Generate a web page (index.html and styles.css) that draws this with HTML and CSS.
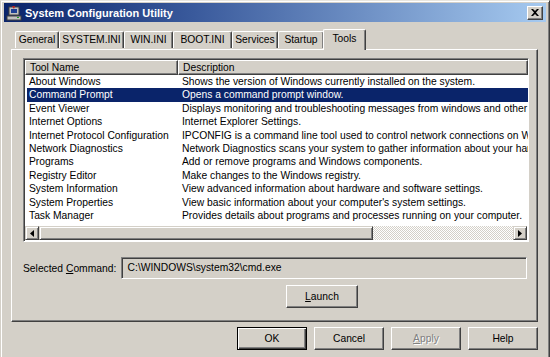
FILE: index.html
```html
<!DOCTYPE html>
<html>
<head>
  <link rel="stylesheet" href="styles.css">
</head>
<body>
  <div class="window">
    <div class="titlebar">
      <svg class="app-icon" width="16" height="16" viewBox="0 0 16 16">
        <rect x="3" y="2" width="10" height="8" fill="#c0c0c0" stroke="#404040" stroke-width="1"/>
        <rect x="5" y="4" width="6" height="4" fill="#1c3f94"/>
        <rect x="1" y="11" width="14" height="4" fill="#c0c0c0" stroke="#404040" stroke-width="1"/>
        <path d="M6 1 L9 1 L8 4 Z" fill="#c02020"/>
        <rect x="11" y="12" width="2" height="1" fill="#20a020"/>
      </svg>
      <span class="title">System Configuration Utility</span>
      <button class="close-btn">
        <svg width="8" height="7" viewBox="0 0 8 7"><path d="M0 0h2l2 2 2-2h2L5 3.5 8 7H6L4 5 2 7H0l3-3.5z" fill="#000"/></svg>
      </button>
    </div>

    <div class="content">
      <div class="tabs">
        <div class="tab" style="width:44px">General</div>
        <div class="tab" style="width:65px">SYSTEM.INI</div>
        <div class="tab" style="width:49px">WIN.INI</div>
        <div class="tab" style="width:59px">BOOT.INI</div>
        <div class="tab" style="width:46px">Services</div>
        <div class="tab" style="width:46px">Startup</div>
        <div class="tab active" style="width:43px">Tools</div>
      </div>

      <div class="panel">
        <div class="listview">
          <div class="lv-header">
            <div class="col-head">Tool Name</div>
            <div class="col-head">Description</div>
          </div>
          <div class="lv-body">
            <div class="row"><span>About Windows</span><span>Shows the version of Windows currently installed on the system.</span></div>
            <div class="row selected"><span>Command Prompt</span><span>Opens a command prompt window.</span></div>
            <div class="row"><span>Event Viewer</span><span>Displays monitoring and troubleshooting messages from windows and other programs.</span></div>
            <div class="row"><span>Internet Options</span><span>Internet Explorer Settings.</span></div>
            <div class="row"><span>Internet Protocol Configuration</span><span>IPCONFIG is a command line tool used to control network connections on Windows.</span></div>
            <div class="row"><span>Network Diagnostics</span><span>Network Diagnostics scans your system to gather information about your hardware.</span></div>
            <div class="row"><span>Programs</span><span>Add or remove programs and Windows components.</span></div>
            <div class="row"><span>Registry Editor</span><span>Make changes to the Windows registry.</span></div>
            <div class="row"><span>System Information</span><span>View advanced information about hardware and software settings.</span></div>
            <div class="row"><span>System Properties</span><span>View basic information about your computer's system settings.</span></div>
            <div class="row"><span>Task Manager</span><span>Provides details about programs and processes running on your computer.</span></div>
          </div>
          <div class="hscroll">
            <div class="sb-btn"><svg width="4" height="7" viewBox="0 0 4 7"><path d="M4 0v7L0 3.5z" fill="#000"/></svg></div>
            <div class="sb-track">
              <div class="sb-thumb"></div>
            </div>
            <div class="sb-btn"><svg width="4" height="7" viewBox="0 0 4 7"><path d="M0 0v7l4-3.5z" fill="#000"/></svg></div>
          </div>
        </div>

        <div class="command-row">
          <span class="label">Selected <u>C</u>ommand:</span>
          <div class="cmd-box">C:\WINDOWS\system32\cmd.exe</div>
        </div>

        <div class="launch-row">
          <button class="btn launch"><u>L</u>aunch</button>
        </div>
      </div>

      <div class="footer">
        <button class="btn default">OK</button>
        <button class="btn">Cancel</button>
        <button class="btn disabled"><u>A</u>pply</button>
        <button class="btn">Help</button>
      </div>
    </div>
  </div>
</body>
</html>
```

FILE: styles.css
```css
body {
  margin: 0;
  background: #d4d0c8;
  font-family: 'Liberation Sans', Arial, sans-serif;
  font-size: 10.3px;
  color: #000;
}

.window {
  width: 550px;
  height: 357px;
  box-sizing: border-box;
  padding: 3px 3px 0 3px;
  background: #d4d0c8;
  border-top: 1px solid #e8e6e0;
  border-left: 1px solid #d4d0c8;
  border-right: 1px solid #404040;
  box-shadow: inset 1px 1px 0 #fff, inset -1px 0 0 #808080;
  overflow: hidden;
}

.titlebar {
  height: 19px;
  margin-top: -1px;
  display: flex;
  align-items: center;
  padding: 0 3px 0 2px;
  background: linear-gradient(90deg, #0a246a 0%, #3a5a9c 35%, #a6caf0 100%);
}

.app-icon {
  flex: none;
  margin-right: 3px;
}

.title {
  color: #fff;
  font-weight: bold;
  font-size: 11px;
  flex: 1;
}

.close-btn {
  width: 16px;
  height: 14px;
  padding: 0;
  background: #d4d0c8;
  border: 1px solid;
  border-color: #fff #404040 #404040 #fff;
  box-shadow: inset -1px -1px 0 #808080;
  display: flex;
  align-items: center;
  justify-content: center;
}

.content {
  padding: 0 8px 0 7px;
}

.tabs {
  display: flex;
  align-items: flex-end;
  height: 24px;
  margin-top: 3px;
  padding-left: 4px;
  position: relative;
  z-index: 1;
}

.tab {
  height: 17px;
  box-sizing: border-box;
  border-top: 1px solid #fff;
  border-left: 1px solid #fff;
  border-right: 1px solid #404040;
  box-shadow: inset -1px 0 0 #808080;
  border-radius: 2px 2px 0 0;
  text-align: center;
  line-height: 16px;
  margin-bottom: 1px;
  white-space: nowrap;
}

.tab.active {
  height: 21px;
  margin-bottom: -1px;
  margin-left: -1px;
  background: #d4d0c8;
  line-height: 18px;
  padding-bottom: 2px;
}

.panel {
  height: 273px;
  box-sizing: border-box;
  border-top: 1px solid #fff;
  border-left: 1px solid #fff;
  border-right: 1px solid #404040;
  border-bottom: 1px solid #404040;
  box-shadow: inset -1px -1px 0 #808080;
  padding: 8px 10px 0 11px;
}

.listview {
  width: 506px;
  height: 184px;
  box-sizing: border-box;
  border: 1px solid;
  border-color: #808080 #fff #fff #808080;
  box-shadow: inset 1px 1px 0 #404040;
  background: #fff;
  display: flex;
  flex-direction: column;
  overflow: hidden;
}

.lv-header {
  display: grid;
  grid-template-columns: 153px 1fr;
  height: 15px;
  margin: 1px 0 0 1px;
  flex: none;
}

.col-head {
  background: #d4d0c8;
  border-top: 1px solid #fff;
  border-left: 1px solid #fff;
  border-right: 1px solid #404040;
  border-bottom: 1px solid #404040;
  box-shadow: inset -1px -1px 0 #808080;
  line-height: 13px;
  padding-left: 4px;
  white-space: nowrap;
}

.lv-body {
  flex: 1;
  overflow: hidden;
  padding-left: 3px;
}

.row {
  display: grid;
  grid-template-columns: 153px 1000px;
  height: 13.4px;
  line-height: 13.4px;
  white-space: nowrap;
}

.row span {
  padding-left: 2px;
}

.row.selected {
  background: #0a246a;
  color: #fff;
}

.hscroll {
  flex: none;
  height: 14px;
  display: flex;
  margin: 0 1px 1px 1px;
}

.sb-btn {
  width: 14px;
  height: 14px;
  box-sizing: border-box;
  background: #d4d0c8;
  border: 1px solid;
  border-color: #d4d0c8 #404040 #404040 #d4d0c8;
  box-shadow: inset 1px 1px 0 #fff, inset -1px -1px 0 #808080;
  display: flex;
  align-items: center;
  justify-content: center;
}

.sb-track {
  flex: 1;
  background-color: #fff;
  background-image: repeating-conic-gradient(#d4d0c8 0 25%, #fff 0 50%);
  background-size: 2px 2px;
}

.sb-thumb {
  width: 334px;
  height: 14px;
  box-sizing: border-box;
  background: #d4d0c8;
  border: 1px solid;
  border-color: #d4d0c8 #404040 #404040 #d4d0c8;
  box-shadow: inset 1px 1px 0 #fff, inset -1px -1px 0 #808080;
}

.command-row {
  display: flex;
  align-items: center;
  margin-top: 15px;
}

.label {
  width: 98px;
  white-space: nowrap;
}

.cmd-box {
  width: 408px;
  height: 22px;
  box-sizing: border-box;
  border: 1px solid;
  border-color: #808080 #fff #fff #808080;
  box-shadow: inset 1px 1px 0 #404040;
  background: #d4d0c8;
  line-height: 20px;
  padding-left: 6px;
}

.launch-row {
  display: flex;
  margin-top: 6px;
  padding-left: 263px;
}

.btn {
  width: 70px;
  height: 23px;
  padding: 0;
  font-family: inherit;
  font-size: 10.3px;
  color: #000;
  background: #d4d0c8;
  border: 1px solid;
  border-color: #fff #404040 #404040 #fff;
  box-shadow: inset -1px -1px 0 #808080;
}

.launch {
  width: 72px;
}

.footer {
  display: flex;
  justify-content: flex-end;
  gap: 7px;
  margin-top: 5px;
}

.btn.default {
  border: 1px solid #000;
  box-shadow: inset 1px 1px 0 #fff, inset -1px -1px 0 #404040, inset -2px -2px 0 #808080;
}

.btn.disabled {
  color: #808080;
  text-shadow: 1px 1px 0 #fff;
}
```
